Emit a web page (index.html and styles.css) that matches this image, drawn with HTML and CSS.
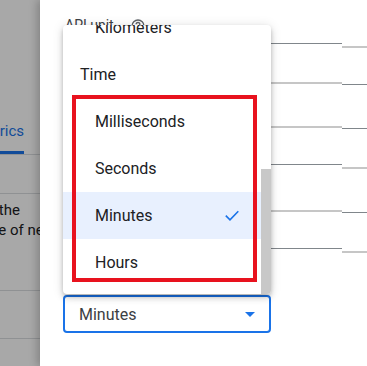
FILE: index.html
```html
<!DOCTYPE html>
<html lang="en">
<head>
<meta charset="utf-8">
<title>Units menu</title>
<link rel="stylesheet" href="styles.css">
</head>
<body>
  <div class="backdrop">
    <div class="page">
      <div class="tabbar"><div class="tab">Metrics</div></div>
      <div class="page-row"></div>
      <div class="desc">
        <div class="desc-line first">Choose a unit to display the</div>
        <div class="desc-line second">values on the scale of new</div>
      </div>
      <div class="page-row tall"></div>
      <div class="page-row last"></div>
    </div>
    <div class="scrim"></div>
  </div>

  <div class="dialog">
    <div class="table">
      <div class="col">
        <div class="cell dark h44">
          <div class="label">API unit
            <svg class="help" viewBox="0 0 24 24" width="16" height="16" aria-hidden="true">
              <circle cx="12" cy="12" r="9" fill="none" stroke="#5f6368" stroke-width="2"/>
              <path d="M9.2 9.5a2.8 2.8 0 0 1 5.6 0c0 2-2.8 2.2-2.8 4.3" fill="none" stroke="#5f6368" stroke-width="2"/>
              <circle cx="12" cy="17" r="1.2" fill="#5f6368"/>
            </svg>
          </div>
        </div>
        <div class="cell light h40"></div>
        <div class="cell light h44"></div>
        <div class="cell dark h37"></div>
        <div class="cell light h47"></div>
        <div class="cell dark h37"></div>
      </div>
      <div class="col">
        <div class="cell light h48"></div>
        <div class="cell dark h37"></div>
        <div class="cell dark h44"></div>
        <div class="cell light h40"></div>
        <div class="cell dark h44"></div>
        <div class="cell light h40"></div>
      </div>
    </div>

    <div class="select">
      <span class="select-value">Minutes</span>
      <span class="caret"></span>
    </div>

    <div class="menu">
      <div class="menu-viewport">
        <div class="menu-list">
          <div class="menu-header">Default</div>
          <div class="menu-item">None</div>
          <div class="menu-header">Distance</div>
          <div class="menu-item">Millimeters</div>
          <div class="menu-item">Centimeters</div>
          <div class="menu-item">Meters</div>
          <div class="menu-item">Kilometers</div>
          <div class="menu-header">Time</div>
          <div class="menu-item">Milliseconds</div>
          <div class="menu-item">Seconds</div>
          <div class="menu-item selected">Minutes
            <svg class="check" viewBox="0 0 14 11" width="14" height="11" aria-hidden="true">
              <polyline points="0.8,5.6 5,9.8 13.3,1.2" fill="none" stroke="#1a73e8" stroke-width="1.6"/>
            </svg>
          </div>
          <div class="menu-item">Hours</div>
        </div>
      </div>
      <div class="scrolltrack"><div class="thumb"></div></div>
    </div>

    <div class="highlight-box"></div>
  </div>
</body>
</html>
```
FILE: styles.css
```css
* { box-sizing: border-box; }

html, body {
  margin: 0;
  padding: 0;
  width: 367px;
  height: 366px;
  overflow: hidden;
  font-family: Roboto, "Noto Sans", "Liberation Sans", sans-serif;
  background: #fff;
}

body {
  display: flex;
}

/* ----- dimmed page behind the dialog ----- */
.backdrop {
  position: relative;
  width: 40px;
  flex-shrink: 0;
  overflow: hidden;
  background: #fff;
}

.page {
  width: 300px;
  margin-left: -260px;
  padding-top: 107px;
  color: #202124;
}

.tabbar {
  height: 48px;
  border-bottom: 1px solid #dadce0;
  display: flex;
  justify-content: flex-end;
  padding-right: 18px;
}

.tab {
  height: 47px;
  line-height: 48px;
  font-size: 15px;
  color: #1a73e8;
  border-bottom: 3px solid #1a73e8;
  padding-left: 16px;
  white-space: nowrap;
  margin-right: -2px;
}

.page-row {
  height: 39px;
  border-bottom: 1px solid #dadce0;
}

.page-row.tall {
  height: 51px;
}

.page-row.last {
  height: 48px;
}

.desc {
  margin-top: 6px;
  font-size: 15px;
  line-height: 20px;
}

.desc-line {
  white-space: nowrap;
  text-align: right;
}

.desc-line.first {
  padding-right: 20px;
}

.desc-line.second {
  margin-right: -15px;
}

.scrim {
  position: absolute;
  inset: 0;
  background: rgba(0, 0, 0, 0.34);
}

/* ----- dialog ----- */
.dialog {
  position: relative;
  z-index: 1;
  flex: 1;
  background: #fff;
  padding-left: 23px;
  box-shadow: -3px 0 8px rgba(0, 0, 0, 0.22);
}

.table {
  display: grid;
  grid-template-columns: 279px 1fr;
}

.col {
  display: flex;
  flex-direction: column;
}

.cell.dark { border-bottom: 1px solid #80868b; }
.cell.light { border-bottom: 2px solid #c6c6c6; }

.h37 { height: 37px; }
.h40 { height: 40px; }
.h44 { height: 44px; }
.h47 { height: 47px; }
.h48 { height: 48px; }

.label {
  padding: 15px 0 0 2px;
  font-size: 14px;
  line-height: 20px;
  color: #3c4043;
  display: flex;
  align-items: flex-start;
}

.help {
  margin: 3px 0 0 16px;
}

/* ----- select ----- */
.select {
  margin-top: 42px;
  width: 208px;
  height: 38px;
  border: 2px solid #1a73e8;
  border-radius: 4px;
  display: flex;
  align-items: center;
  justify-content: space-between;
  padding: 0 14px 0 14px;
  font-size: 16px;
  color: #3c4043;
}

.caret {
  width: 0;
  height: 0;
  border-left: 5px solid transparent;
  border-right: 5px solid transparent;
  border-top: 5px solid #1a73e8;
  margin-top: 1px;
}

/* ----- dropdown menu (overlay) ----- */
.menu {
  position: absolute;
  z-index: 2;
  left: 23px;
  top: 25px;
  width: 208px;
  height: 269px;
  background: #fff;
  border-radius: 4px;
  overflow: hidden;
  display: flex;
  box-shadow: 0 2px 4px -1px rgba(0, 0, 0, 0.2),
              0 4px 6px 0 rgba(0, 0, 0, 0.14),
              0 1px 12px 0 rgba(0, 0, 0, 0.12);
}

.menu-viewport {
  flex: 1;
  min-width: 0;
  overflow: hidden;
  display: flex;
  flex-direction: column;
  justify-content: flex-end;
}

.scrolltrack {
  width: 10px;
  flex-shrink: 0;
  display: flex;
  flex-direction: column;
  justify-content: flex-end;
}

.thumb {
  height: 125px;
  background: #c8c8c8;
}

.menu-list {
  padding: 8px 0;
  flex-shrink: 0;
}

.menu-header,
.menu-item {
  height: 47px;
  display: flex;
  align-items: center;
  font-size: 16px;
  color: #202124;
  white-space: nowrap;
}

.menu-header {
  padding-left: 17px;
}

.menu-item {
  padding-left: 32px;
  padding-right: 22px;
  justify-content: space-between;
}

.menu-item.selected {
  background: #e8f0fe;
}

/* ----- red annotation frame ----- */
.highlight-box {
  position: absolute;
  z-index: 3;
  left: 32px;
  top: 95px;
  width: 185px;
  height: 187px;
  border: 4px solid #e8121e;
}
```
